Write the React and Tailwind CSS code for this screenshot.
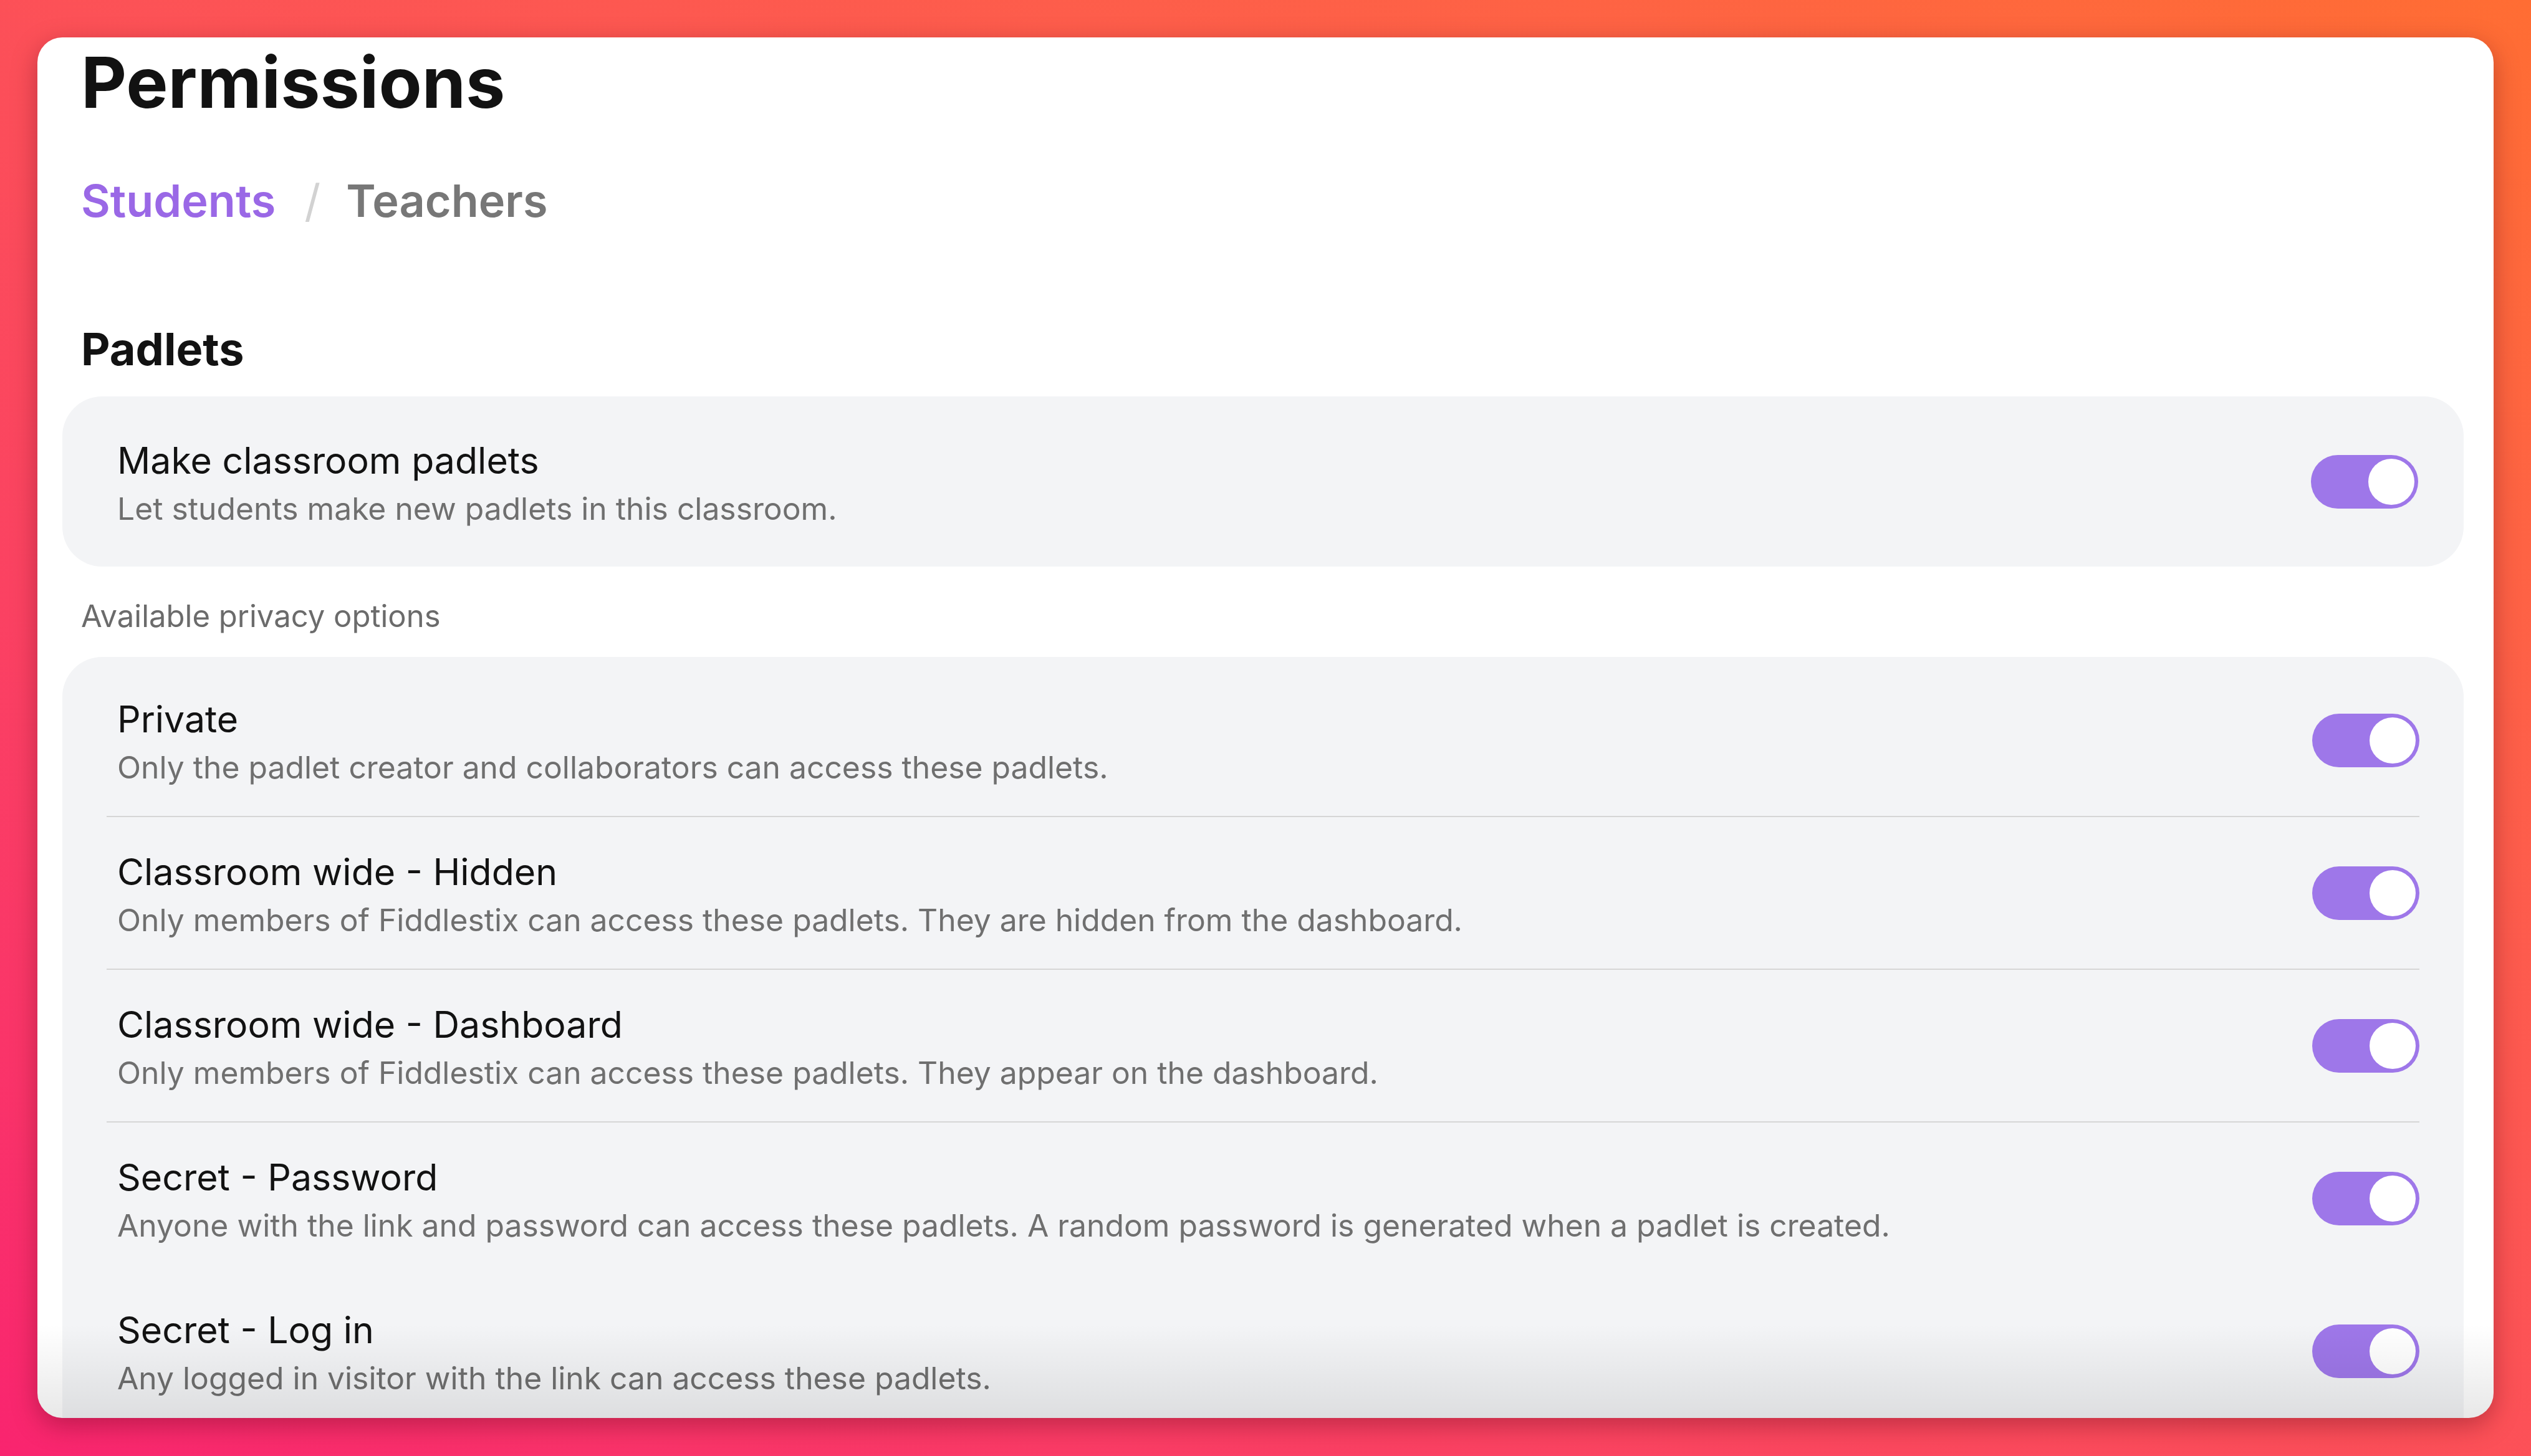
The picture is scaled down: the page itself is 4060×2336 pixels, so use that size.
import React from "react";

const rows = [
  { t: "Private", d: "Only the padlet creator and collaborators can access these padlets.", line: true },
  { t: "Classroom wide - Hidden", d: "Only members of Fiddlestix can access these padlets. They are hidden from the dashboard.", line: true },
  { t: "Classroom wide - Dashboard", d: "Only members of Fiddlestix can access these padlets. They appear on the dashboard.", line: true },
  { t: "Secret - Password", d: "Anyone with the link and password can access these padlets. A random password is generated when a padlet is created.", line: false },
  { t: "Secret - Log in", d: "Any logged in visitor with the link can access these padlets.", line: false },
];

function Toggle() {
  return (
    <div className="w-[172px] h-[86px] shrink-0 rounded-full bg-[#9e77e9] p-[6px] flex justify-end items-center">
      <div className="w-[74px] h-[74px] rounded-full bg-white" />
    </div>
  );
}

function TextBlock({ t, d }) {
  return (
    <div className="pt-[6px]">
      <div className="text-[59px] leading-[66px] text-[#121212]">{t}</div>
      <div className="mt-[14px] text-[49.8px] leading-[60px] text-[#6f6f6f]">{d}</div>
    </div>
  );
}

export default function App() {
  return (
    <div
      className="w-[4060px] h-[2336px] overflow-hidden bg-linear-to-tr from-[#f9246f] to-[#ff6d33] pt-[60px] pl-[60px]"
      style={{ fontFamily: "Inter, 'Noto Sans', sans-serif" }}
    >
      <div className="relative w-[3940px] h-[2215px] rounded-[40px] bg-white overflow-hidden shadow-[0_12px_40px_rgba(80,0,20,0.35)]">
        <div className="pl-[40px] pr-[48px] pt-[2px]">
          <h1 className="pl-[30px] text-[113px] leading-[140px] font-bold text-[#121212]">Permissions</h1>
          <div className="pl-[30px] mt-[76px] flex items-baseline text-[72px] leading-[87px] font-semibold">
            <span className="text-[#9a68e6]">Students</span>
            <span className="ml-[46px] mr-[41px] font-normal text-[#d2d2d2]">/</span>
            <span className="text-[#777777]">Teachers</span>
          </div>
          <h2 className="pl-[30px] mt-[151px] text-[72px] leading-[87px] font-bold text-[#121212]">Padlets</h2>
          <div className="mt-[33px] h-[273px] rounded-[64px] bg-[#f3f4f6] flex items-center justify-between pl-[88px] pr-[73px]">
            <TextBlock t="Make classroom padlets" d="Let students make new padlets in this classroom." />
            <Toggle />
          </div>
          <div className="mt-[50px] pl-[30px] text-[49px] leading-[60px] text-[#6b6b6b]">Available privacy options</div>
          <div className="mt-[35px] rounded-[64px] bg-[#f3f4f6] pt-[12px] px-[71px] pb-[80px]">
            {rows.map((r) => (
              <div
                key={r.t}
                className={
                  "h-[245px] flex items-center justify-between border-b-2 " +
                  (r.line ? "border-[#d6d6d6]" : "border-transparent")
                }
              >
                <div className="pl-[17px]">
                  <TextBlock t={r.t} d={r.d} />
                </div>
                <Toggle />
              </div>
            ))}
          </div>
        </div>
        <div className="pointer-events-none absolute bottom-0 left-0 right-0 h-[150px] bg-linear-to-b from-transparent to-black/[0.09]" />
      </div>
    </div>
  );
}
